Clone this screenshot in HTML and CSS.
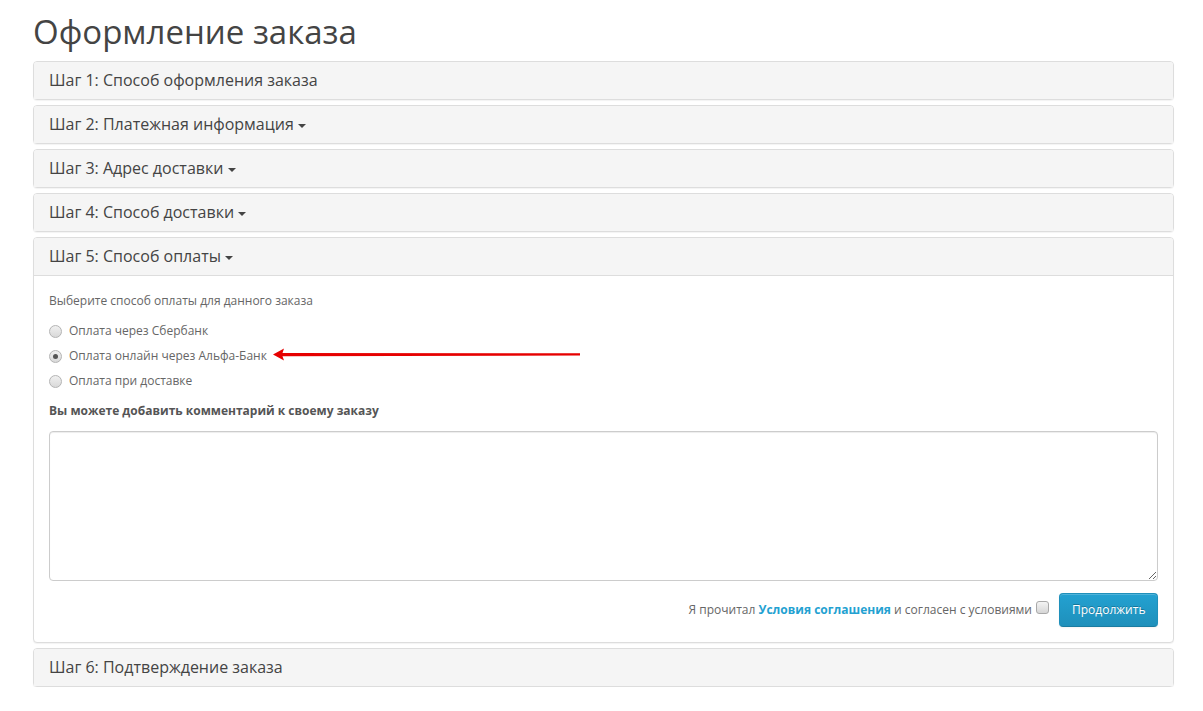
FILE: index.html
```html
<!DOCTYPE html>
<html lang="ru">
<head>
<meta charset="utf-8">
<title>Оформление заказа</title>
<link rel="stylesheet" href="styles.css">
</head>
<body>
<div class="container">
  <h1 class="page-title">Оформление заказа</h1>
  <div class="panel-group">
    <div class="panel">
      <div class="panel-heading"><h4 class="panel-title">Шаг 1: Способ оформления заказа</h4></div>
    </div>
    <div class="panel">
      <div class="panel-heading"><h4 class="panel-title">Шаг 2: Платежная информация <span class="caret"></span></h4></div>
    </div>
    <div class="panel">
      <div class="panel-heading"><h4 class="panel-title">Шаг 3: Адрес доставки <span class="caret"></span></h4></div>
    </div>
    <div class="panel">
      <div class="panel-heading"><h4 class="panel-title">Шаг 4: Способ доставки <span class="caret"></span></h4></div>
    </div>
    <div class="panel">
      <div class="panel-heading"><h4 class="panel-title">Шаг 5: Способ оплаты <span class="caret"></span></h4></div>
      <div class="panel-body">
        <p class="intro">Выберите способ оплаты для данного заказа</p>
        <div class="radios">
          <label class="radio"><input type="radio" name="pay"> Оплата через Сбербанк</label>
          <label class="radio"><input type="radio" name="pay" checked> Оплата онлайн через Альфа-Банк</label>
          <label class="radio"><input type="radio" name="pay"> Оплата при доставке</label>
        </div>
        <p class="comment-label"><strong>Вы можете добавить комментарий к своему заказу</strong></p>
        <textarea class="comment" rows="8"></textarea>
        <div class="buttons">
          <span class="agree">Я прочитал <a href="#" class="agree-link">Условия соглашения</a> и согласен с условиями</span>
          <input type="checkbox" class="agree-box">
          <button type="button" class="btn-primary">Продолжить</button>
        </div>
      </div>
    </div>
    <div class="panel">
      <div class="panel-heading"><h4 class="panel-title">Шаг 6: Подтверждение заказа</h4></div>
    </div>
  </div>
</div>
<svg class="annot-arrow" width="320" height="20" viewBox="0 0 320 20" xmlns="http://www.w3.org/2000/svg">
  <polygon points="2,9.5 13,3.5 11.5,8 309,8.3 309,10.5 11.5,11.2 13,15.5" fill="#e60000"/>
</svg>
</body>
</html>
```
FILE: styles.css
```css
html, body {
  margin: 0;
  padding: 0;
  background: #fff;
}
body {
  font-family: "Open Sans", "Liberation Sans", sans-serif;
  font-size: 12px;
  line-height: 20px;
  color: #666;
  position: relative;
}
.container {
  width: 1141px;
  margin-left: 33px;
  padding-top: 12px;
}
.page-title {
  font-family: "Open Sans", sans-serif;
  font-weight: 400;
  font-size: 33px;
  line-height: 40px;
  color: #444;
  margin: 0 0 9px 0;
}
.panel-group {
  display: flex;
  flex-direction: column;
  gap: 5px;
}
.panel {
  background: #fff;
  border: 1px solid #ddd;
  border-radius: 4px;
  box-shadow: 0 1px 1px rgba(0,0,0,0.05);
}
.panel-heading {
  background: #f5f5f5;
  padding: 10px 15px;
  border-radius: 3px 3px 0 0;
}
.panel-title {
  margin: 0;
  font-size: 16px;
  font-weight: 400;
  line-height: 17px;
  color: #444;
}
.caret {
  display: inline-block;
  width: 0;
  height: 0;
  margin-left: 0;
  vertical-align: middle;
  border-top: 4px solid #444;
  border-left: 4px solid transparent;
  border-right: 4px solid transparent;
}
.panel-body {
  border-top: 1px solid #ddd;
  padding: 15px;
}
.intro {
  margin: 0 0 10px 0;
}
.radios {
  display: flex;
  flex-direction: column;
  gap: 5px;
  margin-bottom: 10px;
}
.radio {
  display: flex;
  align-items: center;
  height: 20px;
  gap: 7px;
  cursor: pointer;
}
.radio input {
  -webkit-appearance: none;
  appearance: none;
  margin: 0;
  width: 13px;
  height: 13px;
  border-radius: 50%;
  border: 1px solid #b4b4b4;
  background: linear-gradient(#f0f0f0, #d9d9d9);
  box-sizing: border-box;
  position: relative;
}
.radio input:checked::after {
  content: "";
  position: absolute;
  left: 3px;
  top: 3px;
  width: 5px;
  height: 5px;
  border-radius: 50%;
  background: #555;
}
.comment-label {
  margin: 0 0 10px 0;
  color: #555;
}
.comment {
  display: block;
  box-sizing: border-box;
  width: 100%;
  height: 150px;
  border: 1px solid #ccc;
  border-radius: 4px;
  box-shadow: inset 0 1px 1px rgba(0,0,0,0.075);
  margin: 0;
  padding: 6px 12px;
  font-family: inherit;
  font-size: 12px;
}
.buttons {
  display: flex;
  justify-content: flex-end;
  align-items: center;
  margin-top: 12px;
}
.agree {
  color: #666;
  margin-right: 4px;
}
.agree-link {
  color: #23a1d1;
  font-weight: 700;
  text-decoration: none;
}
.agree-box {
  -webkit-appearance: none;
  appearance: none;
  margin: 0 10px 6px 0;
  width: 13px;
  height: 13px;
  border: 1px solid #a9a9a9;
  border-radius: 3px;
  background: linear-gradient(#f4f4f4, #d6d6d6);
  box-sizing: border-box;
}
.btn-primary {
  font-family: inherit;
  font-size: 12px;
  line-height: 18px;
  color: #fff;
  padding: 7px 12px 8px;
  width: 99px;
  height: 34px;
  border: 1px solid #1f90bb;
  border-bottom-color: #1a7ca1;
  border-radius: 4px;
  background: linear-gradient(#23a1d1, #1f90bb);
  text-shadow: 0 -1px 0 rgba(0,0,0,0.25);
  box-shadow: inset 0 1px 0 rgba(255,255,255,0.2), 0 1px 2px rgba(0,0,0,0.05);
  cursor: pointer;
}
.annot-arrow {
  position: absolute;
  left: 271px;
  top: 345px;
}
```
